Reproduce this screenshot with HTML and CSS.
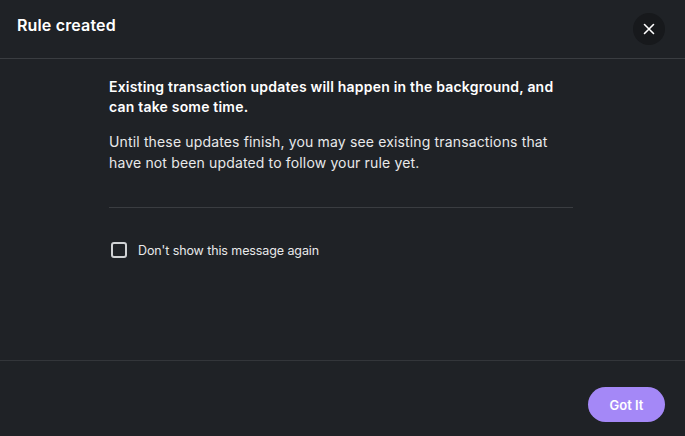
FILE: index.html
```html
<!DOCTYPE html>
<html>
<head>
<meta charset="utf-8">
<link rel="stylesheet" href="styles.css">
</head>
<body>
<div class="modal">
  <header class="header">
    <h1 class="title">Rule created</h1>
    <button class="close" aria-label="Close">
      <svg width="12" height="12" viewBox="0 0 12 12"><path d="M1.5 1.5L10.5 10.5M10.5 1.5L1.5 10.5" stroke="#fff" stroke-width="1.6" stroke-linecap="round"/></svg>
    </button>
  </header>
  <main class="content">
    <div class="inner">
      <p class="lead">Existing transaction updates will happen in the background, and can take some time.</p>
      <p class="text">Until these updates finish, you may see existing transactions that have not been updated to follow your rule yet.</p>
      <hr class="divider">
      <label class="check">
        <span class="box"></span>
        <span class="label">Don't show this message again</span>
      </label>
    </div>
  </main>
  <footer class="footer">
    <button class="primary">Got It</button>
  </footer>
</div>
</body>
</html>
```
FILE: styles.css
```css
* { box-sizing: border-box; }
html, body { margin: 0; padding: 0; background: #1f2226; }
body { font-family: Inter, "Noto Sans", sans-serif; color: #fff; }
.modal { width: 685px; height: 436px; display: flex; flex-direction: column; background: #1f2226; }
.header { height: 59px; border-bottom: 1px solid #3a3d41; display: flex; align-items: center; justify-content: space-between; padding: 0 20px 8px 17px; }
.title { margin: 0; font-size: 16px; font-weight: 600; letter-spacing: 0.15px; }
.close { width: 32px; height: 32px; border-radius: 50%; border: none; background: #17191c; display: flex; align-items: center; justify-content: center; padding: 0; margin-top: 8px; }
.content { flex: 1; display: flex; justify-content: center; padding-right: 3px; border-bottom: 1px solid #33363a; }
.inner { width: 464px; padding-top: 18px; }
.lead { margin: 0; font-size: 14px; line-height: 20px; font-weight: 600; letter-spacing: 0.2px; }
.text { margin: 14px 0 0; font-size: 14px; line-height: 21px; font-weight: 400; color: #e8e9ea; letter-spacing: 0.15px; }
.divider { border: none; border-top: 1px solid #3a3d41; margin: 34px 0 0; }
.check { display: flex; align-items: center; gap: 11px; margin-top: 32px; padding-left: 2px; height: 20px; }
.box { width: 16px; height: 16px; border: 2px solid #d0d2d4; border-radius: 3px; }
.label { font-size: 12.5px; color: #e8e9ea; letter-spacing: -0.1px; }
.footer { height: 75px; display: flex; justify-content: flex-end; align-items: flex-start; padding: 26px 20px 0 0; }
.primary { width: 77px; height: 35px; border-radius: 18px; border: none; background: #a488f7; color: #fff; font-family: Inter, sans-serif; font-weight: 600; font-size: 13px; }
```
